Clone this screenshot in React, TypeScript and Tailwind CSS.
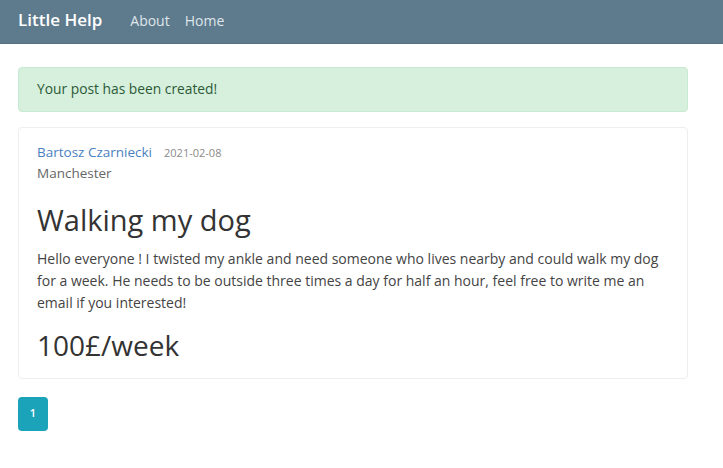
export default function App() {
  return (
    <div className="min-h-[468px] bg-white text-[#212529]" style={{ fontFamily: '"Open Sans", "Noto Sans", sans-serif' }}>
      {/* Navbar */}
      <nav className="h-[44px] bg-[#5e7a8d] flex items-center px-[18px] pb-[3px] border-b border-[#56707f]">
        <span className="text-white text-[17px] font-semibold mr-[28px]">Little Help</span>
        <a className="text-[#dfe6ea] text-[14px] mr-[15px]">About</a>
        <a className="text-[#dfe6ea] text-[14px]">Home</a>
      </nav>

      <div className="w-[670px] ml-[18px] pt-[23px]">
        {/* Alert */}
        <div className="h-[45px] flex items-center px-[18px] bg-[#d6f0dd] border border-[#c8ead2] rounded text-[#2c5a37] text-[13.8px]">
          Your post has been created!
        </div>

        {/* Card */}
        <div className="mt-[15px] border border-[#eeeeee] rounded px-[18px] pt-[14px] pb-[16px]">
          <div className="flex items-baseline gap-[12px]">
            <span className="text-[#4a7fc0] text-[13.5px]">Bartosz Czarniecki</span>
            <span className="text-[#8a8a8a] text-[11px]">2021-02-08</span>
          </div>
          <div className="text-[#666] text-[13.5px] mt-[1px]">Manchester</div>
          <h1 className="text-[29px] text-[#333] mt-[18px] leading-[36px] font-medium">Walking my dog</h1>
          <p className="text-[14px] text-[#444] leading-[22px] mt-[10px] pr-[10px]">
            Hello everyone ! I twisted my ankle and need someone who lives nearby and could walk my dog for a week. He needs to be outside three times a day for half an hour, feel free to write me an email if you interested!
          </p>
          <div className="text-[28px] text-[#333] mt-[14px] leading-[34px] font-medium">100£/week</div>
        </div>

        {/* Pagination */}
        <div className="mt-[18px] flex">
          <span className="w-[30px] h-[34px] flex items-center justify-center rounded bg-[#1aa3b9] text-white text-[11px] font-semibold">1</span>
        </div>
      </div>
    </div>
  )
}
